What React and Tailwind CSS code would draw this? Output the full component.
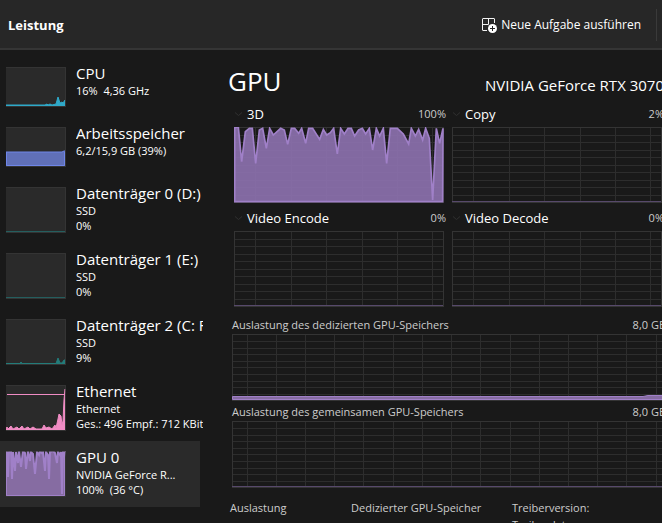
import React from "react";

const engineLoad =
  "13,0 23,104 34,14 46,4 55,4 65,109 76,9 86,4 97,64 107,4 118,24 140,4 151,9 161,52 172,4 182,4 194,19 203,4 215,49 224,4 236,4 257,37 268,7 278,24 289,17 299,4 310,81 320,4 331,21 342,4 352,4 362,27 374,9 385,4 395,21 406,4 416,69 427,4 437,27 448,4 458,109 469,4 490,4 508,21 524,51 532,4 544,27 554,7 566,39 575,4 586,34 596,219 607,4 617,49 627,4";

const devices = [
  {
    name: "CPU",
    lines: ["16%\u00a0 4,36 GHz"],
    color: "#2fa9c9",
    fill: "#2fa9c9",
    short: true,
    points: "0,38 39,38 41,37 42,38 44,37 46,38 50,37 52,30 54,36 56,35 57,36 59,33",
  },
  {
    name: "Arbeitsspeicher",
    lines: ["6,2/15,9 GB (39%)"],
    color: "#6f86e8",
    fill: "#6070b8",
    short: true,
    edges: true,
    points: "0,25 56,25 58,24 59,24",
  },
  { name: "Datenträger 0 (D:)", lines: ["SSD", "0%"], color: "#245e5e", fill: "none", points: "0,44.5 59,44.5" },
  { name: "Datenträger 1 (E:)", lines: ["SSD", "0%"], color: "#245e5e", fill: "none", points: "0,44.5 59,44.5" },
  {
    name: "Datenträger 2 (C: F:)",
    lines: ["SSD", "9%"],
    color: "#237c7a",
    fill: "#237c7a",
    points: "0,44.5 14,44.5 15,43 16,44.5 50,44.5 52,39 54,44 56,44 58,41 59,41",
  },
  {
    name: "Ethernet",
    lines: ["Ethernet", "Ges.: 496 Empf.: 712 KBit/s"],
    color: "#f08cc4",
    fill: "#f08cc4",
    limit: 9,
    points:
      "0,44 1,42 2,44 5,41 7,44 11,42 13,44 16,41 18,44 22,42 24,44 27,42 30,44 36,44 38,40 40,43 43,42 46,44 49,40 50,43 52,34 53,29 55,31 56,40 57,36 58,15 59,4",
  },
  {
    name: "GPU 0",
    lines: ["NVIDIA GeForce R...", "100%\u00a0 (36 °C)"],
    color: "#a080c8",
    fill: "#866ca2",
    active: true,
    edges: true,
    wide: true,
    points:
      "0,0 1,1 2,26 3,1 5,0 6,28 7,1 9,20 10,1 12,12 13,0 15,16 17,0 19,2 20,18 22,0 24,10 25,1 27,3 29,23 31,1 33,4 34,0 36,2 37,1 39,20 40,1 42,4 43,28 44,1 47,0 49,2 51,12 52,1 54,4 55,1 56,43 57,0 58,6 59,0",
  },
];

const engines = [
  { name: "3D", value: "100%", load: true },
  { name: "Copy", value: "2%" },
  { name: "Video Encode", value: "0%" },
  { name: "Video Decode", value: "0%" },
];

const Thumb = ({ device }) => {
  const height = device.short ? 40 : 46;
  return (
    <svg
      className={`w-[60px] shrink-0 bg-[#2a2a2a] ${device.short ? "h-10" : "h-[46px]"}`}
      viewBox={`0 0 60 ${height}`}
      aria-hidden="true"
    >
      <polygon points={`0,${height - 1} ${device.points} 59,${height - 1}`} fill={device.fill} />
      <polyline points={device.points} fill="none" stroke={device.color} strokeWidth={device.wide ? 2 : 1} />
      {device.edges && (
        <path
          d={`M.5 ${device.wide ? 0 : 25}V${height - 1.5}H58.5V${device.wide ? 0 : 25}`}
          fill="none"
          stroke={device.color}
        />
      )}
      {device.limit && <path d={`M1 ${device.limit + 0.5}H59`} stroke={device.color} />}
      <path d={`M0 .5H59.5V${height - 0.5}H0`} fill="none" stroke="#3c3c3c" strokeOpacity="0.6" />
    </svg>
  );
};

const DeviceItem = ({ device }) => (
  <button
    type="button"
    className={`flex w-full items-start text-left pl-[6px] ${device.short ? "h-[60px]" : "h-[66px]"} ${
      device.active ? "bg-[#2a2a2a]" : ""
    }`}
  >
    <span className="block pt-[10px]">
      <Thumb device={device} />
    </span>
    <span className="block w-[127px] shrink-0 overflow-hidden whitespace-nowrap pt-[7px] ml-[10px]">
      <span className="block text-[15px] leading-[19px]">{device.name}</span>
      {device.lines.map((line) => (
        <span key={line} className="block text-[11px] leading-[15px]">
          {line}
        </span>
      ))}
    </span>
  </button>
);

const EngineChart = ({ load }) => (
  <svg className="block w-full h-[76px]" viewBox="0 0 210 76" preserveAspectRatio="none" aria-hidden="true">
    <path
      d="M0 8.5H210M0 15.5H210M0 23.5H210M0 30.5H210M0 38.5H210M0 45.5H210M0 53.5H210M0 60.5H210M0 68.5H210M21.5 0V76M57.5 0V76M92.5 0V76M128.5 0V76M163.5 0V76M198.5 0V76"
      stroke="#2d2d2d"
    />
    <rect x="0.5" y="0.5" width="209" height="75" fill="none" stroke="#343434" />
    {load ? (
      <g transform="scale(0.3333)">
        <polygon
          points={`2,224 2,2 ${engineLoad} 626,224`}
          fill="#8b70ac"
          fillOpacity="0.93"
          stroke="#a080c8"
          strokeWidth="5"
        />
      </g>
    ) : (
      <path d="M0 74.5H209" stroke="#57496b" />
    )}
  </svg>
);

const MemoryChart = ({ used }) => (
  <svg className="block w-full h-[67px]" viewBox="0 0 436 67" preserveAspectRatio="none" aria-hidden="true">
    <path
      d="M0 7.5H436M0 14.5H436M0 20.5H436M0 27.5H436M0 33.5H436M0 40.5H436M0 47.5H436M0 53.5H436M0 60.5H436M15.5 0V67M44.5 0V67M73.5 0V67M102.5 0V67M131.5 0V67M161.5 0V67M190.5 0V67M219.5 0V67M248.5 0V67M278.5 0V67M307.5 0V67M336.5 0V67M365.5 0V67M394.5 0V67M424.5 0V67"
      stroke="#2d2d2d"
    />
    <rect x="0.5" y="0.5" width="435" height="66" fill="none" stroke="#343434" />
    {used ? (
      <path d="M.5 65.5V62.5H411L416 61.5H436V65.5Z" fill="#866ca2" stroke="#a080c8" />
    ) : (
      <path d="M0 65.5H436" stroke="#57496b" />
    )}
  </svg>
);

const NewTaskIcon = () => (
  <svg className="w-4 h-4" viewBox="0 0 16 16" fill="none" aria-hidden="true">
    <path d="M6 13.5H2Q1.5 13.5 1.5 13V2Q1.5 1.5 2 1.5H13Q13.5 1.5 13.5 2V6M1.5 7.5H13.5M7.5 1.5V7.5" stroke="#f2f2f2" />
    <circle cx="11.5" cy="11.5" r="5.5" fill="#272727" />
    <circle cx="11.5" cy="11.5" r="4.5" fill="#fff" />
    <path d="M11.5 9V14M9 11.5H14" stroke="#222" />
  </svg>
);

const App = () => {
  return (
    <div className="flex h-screen flex-col overflow-hidden bg-[#191919] text-white font-['Open_Sans','Noto_Sans',sans-serif]">
      <header className="flex h-[50px] shrink-0 items-center justify-between border-b-2 border-[#353535] bg-[#272727] pt-[2px] pl-2 pr-[5px]">
        <h1 className="text-[13px] leading-5 font-bold">Leistung</h1>
        <div className="flex items-center">
          <button type="button" className="flex items-center gap-1 pr-[15px] text-[12px] leading-5">
            <NewTaskIcon />
            Neue Aufgabe ausführen
          </button>
          <div className="h-8 w-px bg-[#3a3a3a]" />
        </div>
      </header>

      <div className="flex min-h-0 flex-1">
        {/* Device list */}
        <nav className="w-[200px] shrink-0 pt-[7px]">
          {devices.map((device) => (
            <DeviceItem key={device.name} device={device} />
          ))}
        </nav>

        {/* GPU details */}
        <main className="min-w-0 flex-1 overflow-hidden pl-7">
          <div className="-mr-[6px]">
            <div className="flex h-[54px] items-end justify-between pr-1">
              <h2 className="text-[26px] leading-[46px]">GPU</h2>
              <p className="text-[15px] leading-[38px] whitespace-nowrap">NVIDIA GeForce RTX 3070</p>
            </div>

            <div className="pl-1">
              <div className="grid grid-cols-2 gap-x-[6px] pl-[2px] pr-1">
                {engines.map((engine) => (
                  <section key={engine.name} className="h-[104px]">
                    <div className="flex h-[23px] items-start justify-between pt-[2px]">
                      <button type="button" className="flex items-center gap-1 text-[13px] leading-4">
                        <svg className="w-[9px] h-2" viewBox="0 0 9 8" aria-hidden="true">
                          <path d="M1 2.5L4.5 5.5L8 2.5" fill="none" stroke="#303030" />
                        </svg>
                        {engine.name}
                      </button>
                      <span className="text-[11px] leading-4 text-[#cccccc]">{engine.value}</span>
                    </div>
                    <div className="pr-[2px]">
                      <EngineChart load={engine.load} />
                    </div>
                  </section>
                ))}
              </div>

              <section>
                <div className="flex h-[22px] items-end justify-between pr-[2px] pb-px text-[11px] leading-4 text-[#cccccc]">
                  <h3>Auslastung des dedizierten GPU-Speichers</h3>
                  <span>8,0 GB</span>
                </div>
                <MemoryChart used />
              </section>
              <section>
                <div className="flex h-5 items-end justify-between pr-[2px] pb-px text-[11px] leading-4 text-[#cccccc]">
                  <h3>Auslastung des gemeinsamen GPU-Speichers</h3>
                  <span>8,0 GB</span>
                </div>
                <MemoryChart />
              </section>
            </div>

            <div className="flex pl-[2px] pt-[11px] text-[11px] leading-[17px] text-[#cccccc]">
              <p className="w-[121px]">Auslastung</p>
              <p className="w-[161px]">Dedizierter GPU-Speicher</p>
              <div>
                <p>Treiberversion:</p>
                <p>Treiberdatum:</p>
              </div>
            </div>
          </div>
        </main>
      </div>
    </div>
  );
};

export default App;
